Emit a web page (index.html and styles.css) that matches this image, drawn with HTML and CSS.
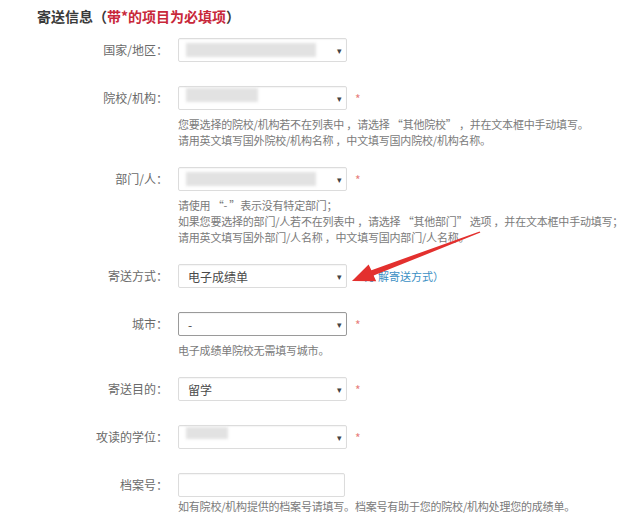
FILE: index.html
```html
<!DOCTYPE html>
<html lang="zh-CN">
<head>
  <meta charset="UTF-8">
  <meta name="viewport" content="width=device-width, initial-scale=1.0">
  <title>寄送信息</title>
  <link rel="stylesheet" href="styles.css">
</head>
<body>
  <div class="page">
    <h2 class="title">寄送信息（<span class="req">带*的项目为必填项</span>）</h2>

    <div class="row">
      <label class="label">国家/地区：</label>
      <div class="field">
        <div class="line">
          <div class="select"><span class="blur blur-long"></span><span class="caret">▾</span></div>
        </div>
      </div>
    </div>

    <div class="row">
      <label class="label">院校/机构：</label>
      <div class="field">
        <div class="line">
          <div class="select"><span class="blur blur-mid"></span><span class="caret">▾</span></div>
          <span class="star">*</span>
        </div>
        <p class="help">您要选择的院校/机构若不在列表中 ，请选择 “其他院校” ，并在文本框中手动填写。<br>请用英文填写国外院校/机构名称 ，中文填写国内院校/机构名称。</p>
      </div>
    </div>

    <div class="row">
      <label class="label">部门/人：</label>
      <div class="field">
        <div class="line">
          <div class="select"><span class="blur blur-long"></span><span class="caret">▾</span></div>
          <span class="star">*</span>
        </div>
        <p class="help">请使用 “- ”表示没有特定部门；<br>如果您要选择的部门/人若不在列表中 ，请选择 “其他部门” 选项 ，并在文本框中手动填写；<br>请用英文填写国外部门/人名称 ，中文填写国内部门/人名称。</p>
      </div>
    </div>

    <div class="row">
      <label class="label">寄送方式：</label>
      <div class="field">
        <div class="line">
          <div class="select"><span class="value">电子成绩单</span><span class="caret">▾</span></div>
          <a class="link" href="#">（了解寄送方式）</a>
        </div>
      </div>
    </div>

    <div class="row">
      <label class="label">城市：</label>
      <div class="field">
        <div class="line">
          <div class="select select-dark"><span class="value">-</span><span class="caret">▾</span></div>
          <span class="star">*</span>
        </div>
        <p class="help">电子成绩单院校无需填写城市。</p>
      </div>
    </div>

    <div class="row">
      <label class="label">寄送目的：</label>
      <div class="field">
        <div class="line">
          <div class="select"><span class="value">留学</span><span class="caret">▾</span></div>
          <span class="star">*</span>
        </div>
      </div>
    </div>

    <div class="row">
      <label class="label">攻读的学位：</label>
      <div class="field">
        <div class="line">
          <div class="select"><span class="blur blur-short"></span><span class="caret">▾</span></div>
          <span class="star">*</span>
        </div>
      </div>
    </div>

    <div class="row">
      <label class="label">档案号：</label>
      <div class="field">
        <div class="line">
          <div class="input"></div>
        </div>
        <p class="help help-tight">如有院校/机构提供的档案号请填写。档案号有助于您的院校/机构处理您的成绩单。</p>
      </div>
    </div>

    <svg class="arrow" width="640" height="527" viewBox="0 0 640 527">
      <polygon points="480.4,232.6 479.6,231.4 371.4,270.2 368.6,264.4 352,281 376.2,281.2 373.6,275.6" fill="#e3302e"/>
    </svg>
  </div>
</body>
</html>
```

FILE: styles.css
```css
body {
  margin: 0;
  background-color: #fff;
  font-family: "Noto Sans CJK SC", "Noto Sans", sans-serif;
  color: #555;
}
.page {
  position: relative;
  width: 640px;
  height: 527px;
  overflow: hidden;
}
.title {
  margin: 0;
  padding: 6px 0 0 37px;
  font-size: 14px;
  line-height: 20px;
  font-weight: bold;
  color: #3a3a3a;
  height: 32px;
  box-sizing: border-box;
}
.title .req {
  color: #c8283a;
}
.row {
  display: grid;
  grid-template-columns: 168px auto;
  column-gap: 10px;
  align-items: start;
  margin-bottom: 24px;
}
.row:first-of-type {
  margin-top: 6px;
}
.label {
  text-align: right;
  font-size: 12px;
  line-height: 24px;
  color: #6a6a6a;
}
.line {
  display: flex;
  align-items: center;
}
.select,
.input {
  position: relative;
  width: 169px;
  height: 24px;
  box-sizing: border-box;
  border: 1px solid #dcdcdc;
  border-radius: 2px;
  background-color: #fff;
  box-shadow: inset 0 1px 1px rgba(0, 0, 0, 0.04);
  display: flex;
  align-items: center;
}
.input {
  width: 167px;
}
.select-dark {
  border-color: #9a9a9a;
}
.value {
  padding-left: 9px;
  font-size: 12px;
  color: #4a4a4a;
}
.caret {
  margin-left: auto;
  margin-right: 4px;
  font-size: 9px;
  color: #444;
}
.blur {
  margin-left: 7px;
  height: 14px;
  background-color: #e2e2e2;
  filter: blur(1.5px);
}
.blur-long {
  width: 130px;
}
.blur-mid {
  width: 72px;
  margin-top: -6px;
}
.blur-short {
  width: 42px;
  margin-top: -8px;
  height: 12px;
}
.star {
  margin-left: 8px;
  font-size: 12px;
  color: #e88080;
}
.link {
  margin-left: 9px;
  font-size: 11px;
  color: #3b8fc4;
  text-decoration: none;
}
.help {
  margin: 6px 0 -5px;
  font-size: 11px;
  line-height: 16px;
  letter-spacing: -0.2px;
  color: #7a7a7a;
  white-space: nowrap;
}
.help-tight {
  margin-top: 1px;
}
.arrow {
  position: absolute;
  left: 0;
  top: 0;
  pointer-events: none;
}
```
